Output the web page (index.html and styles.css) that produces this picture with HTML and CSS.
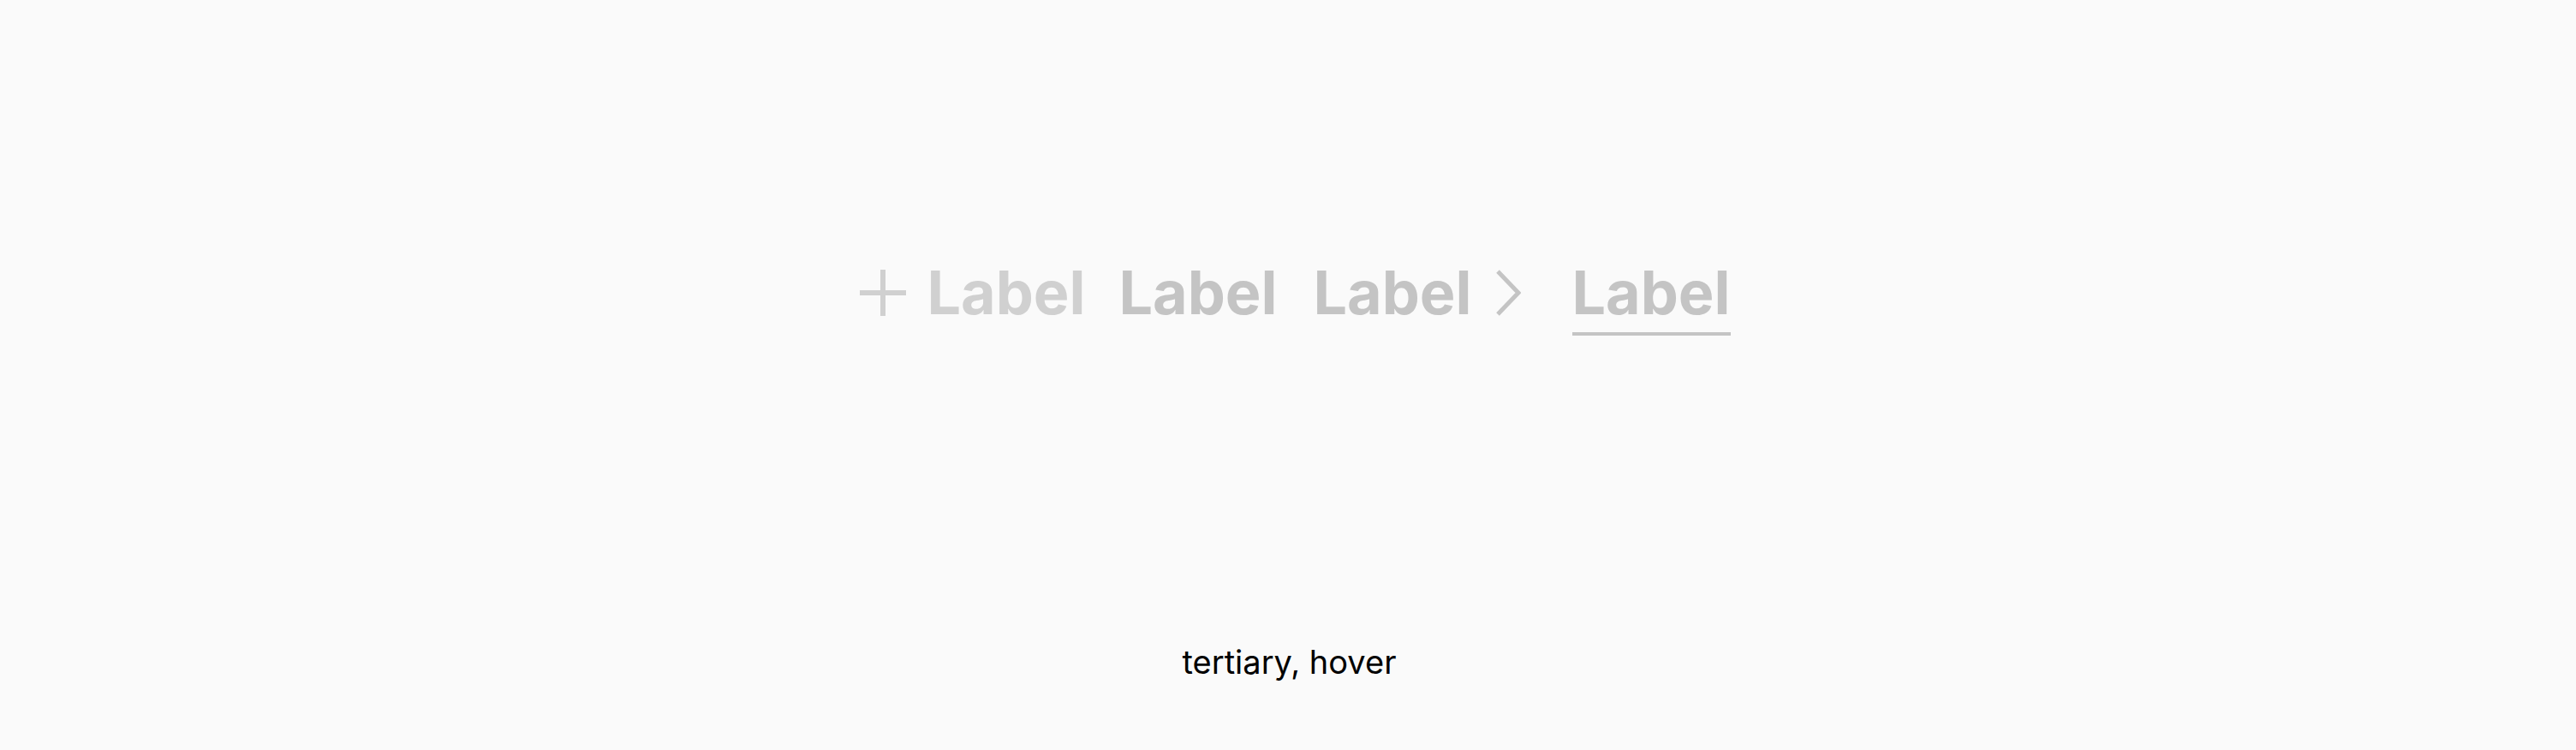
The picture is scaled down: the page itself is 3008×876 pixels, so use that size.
FILE: index.html
```html
<!DOCTYPE html>
<html lang="en">
<head>
<meta charset="utf-8">
<title>tertiary, hover</title>
<link rel="stylesheet" href="styles.css">
</head>
<body>
<main class="page">
  <div class="row">
    <button class="btn btn-muted">
      <svg class="icon-plus" viewBox="0 0 54 54" width="54" height="54" aria-hidden="true">
        <path d="M27 0V54M0 27H54" stroke="currentColor" stroke-width="6" fill="none"/>
      </svg>
      <span class="label">Label</span>
    </button>
    <button class="btn btn-plain">
      <span class="label">Label</span>
    </button>
    <button class="btn btn-chevron">
      <span class="label">Label</span>
      <svg class="icon-chevron" viewBox="0 0 30 54" width="30" height="54" aria-hidden="true">
        <path d="M3 2L27 27L3 52" stroke="currentColor" stroke-width="5" fill="none"/>
      </svg>
    </button>
    <button class="btn btn-link">
      <span class="label">Label</span>
    </button>
  </div>
  <p class="caption">tertiary, hover</p>
</main>
</body>
</html>
```

FILE: styles.css
```css
html, body {
  margin: 0;
  padding: 0;
  background: #fafafa;
}

.page {
  box-sizing: border-box;
  height: 876px;
  padding-top: 307px;
  display: flex;
  flex-direction: column;
  align-items: center;
  font-family: Inter, "Noto Sans", sans-serif;
}

.row {
  display: flex;
  align-items: flex-start;
  gap: 31px;
  padding-left: 17px;
}

.btn {
  display: flex;
  align-items: center;
  margin: 0;
  padding: 0 0 11px 0;
  border: none;
  border-bottom: 4px solid transparent;
  background: none;
  font-family: inherit;
  font-size: 70px;
  font-weight: 700;
  line-height: 1;
  color: #c4c4c4;
  cursor: pointer;
}

.btn-muted {
  color: #d0d0d0;
  gap: 24px;
}

.btn-plain {
  margin-left: 8px;
}

.btn-chevron {
  gap: 27px;
  margin-left: 11px;
}

.btn-link {
  margin-left: 29px;
  border-bottom-color: #c4c4c4;
}

.label {
  display: block;
}

.icon-plus,
.icon-chevron {
  display: block;
  flex: none;
}

.caption {
  margin: 362px 0 0 3px;
  font-size: 38px;
  line-height: 1;
  font-weight: 400;
  color: #000;
}
```
